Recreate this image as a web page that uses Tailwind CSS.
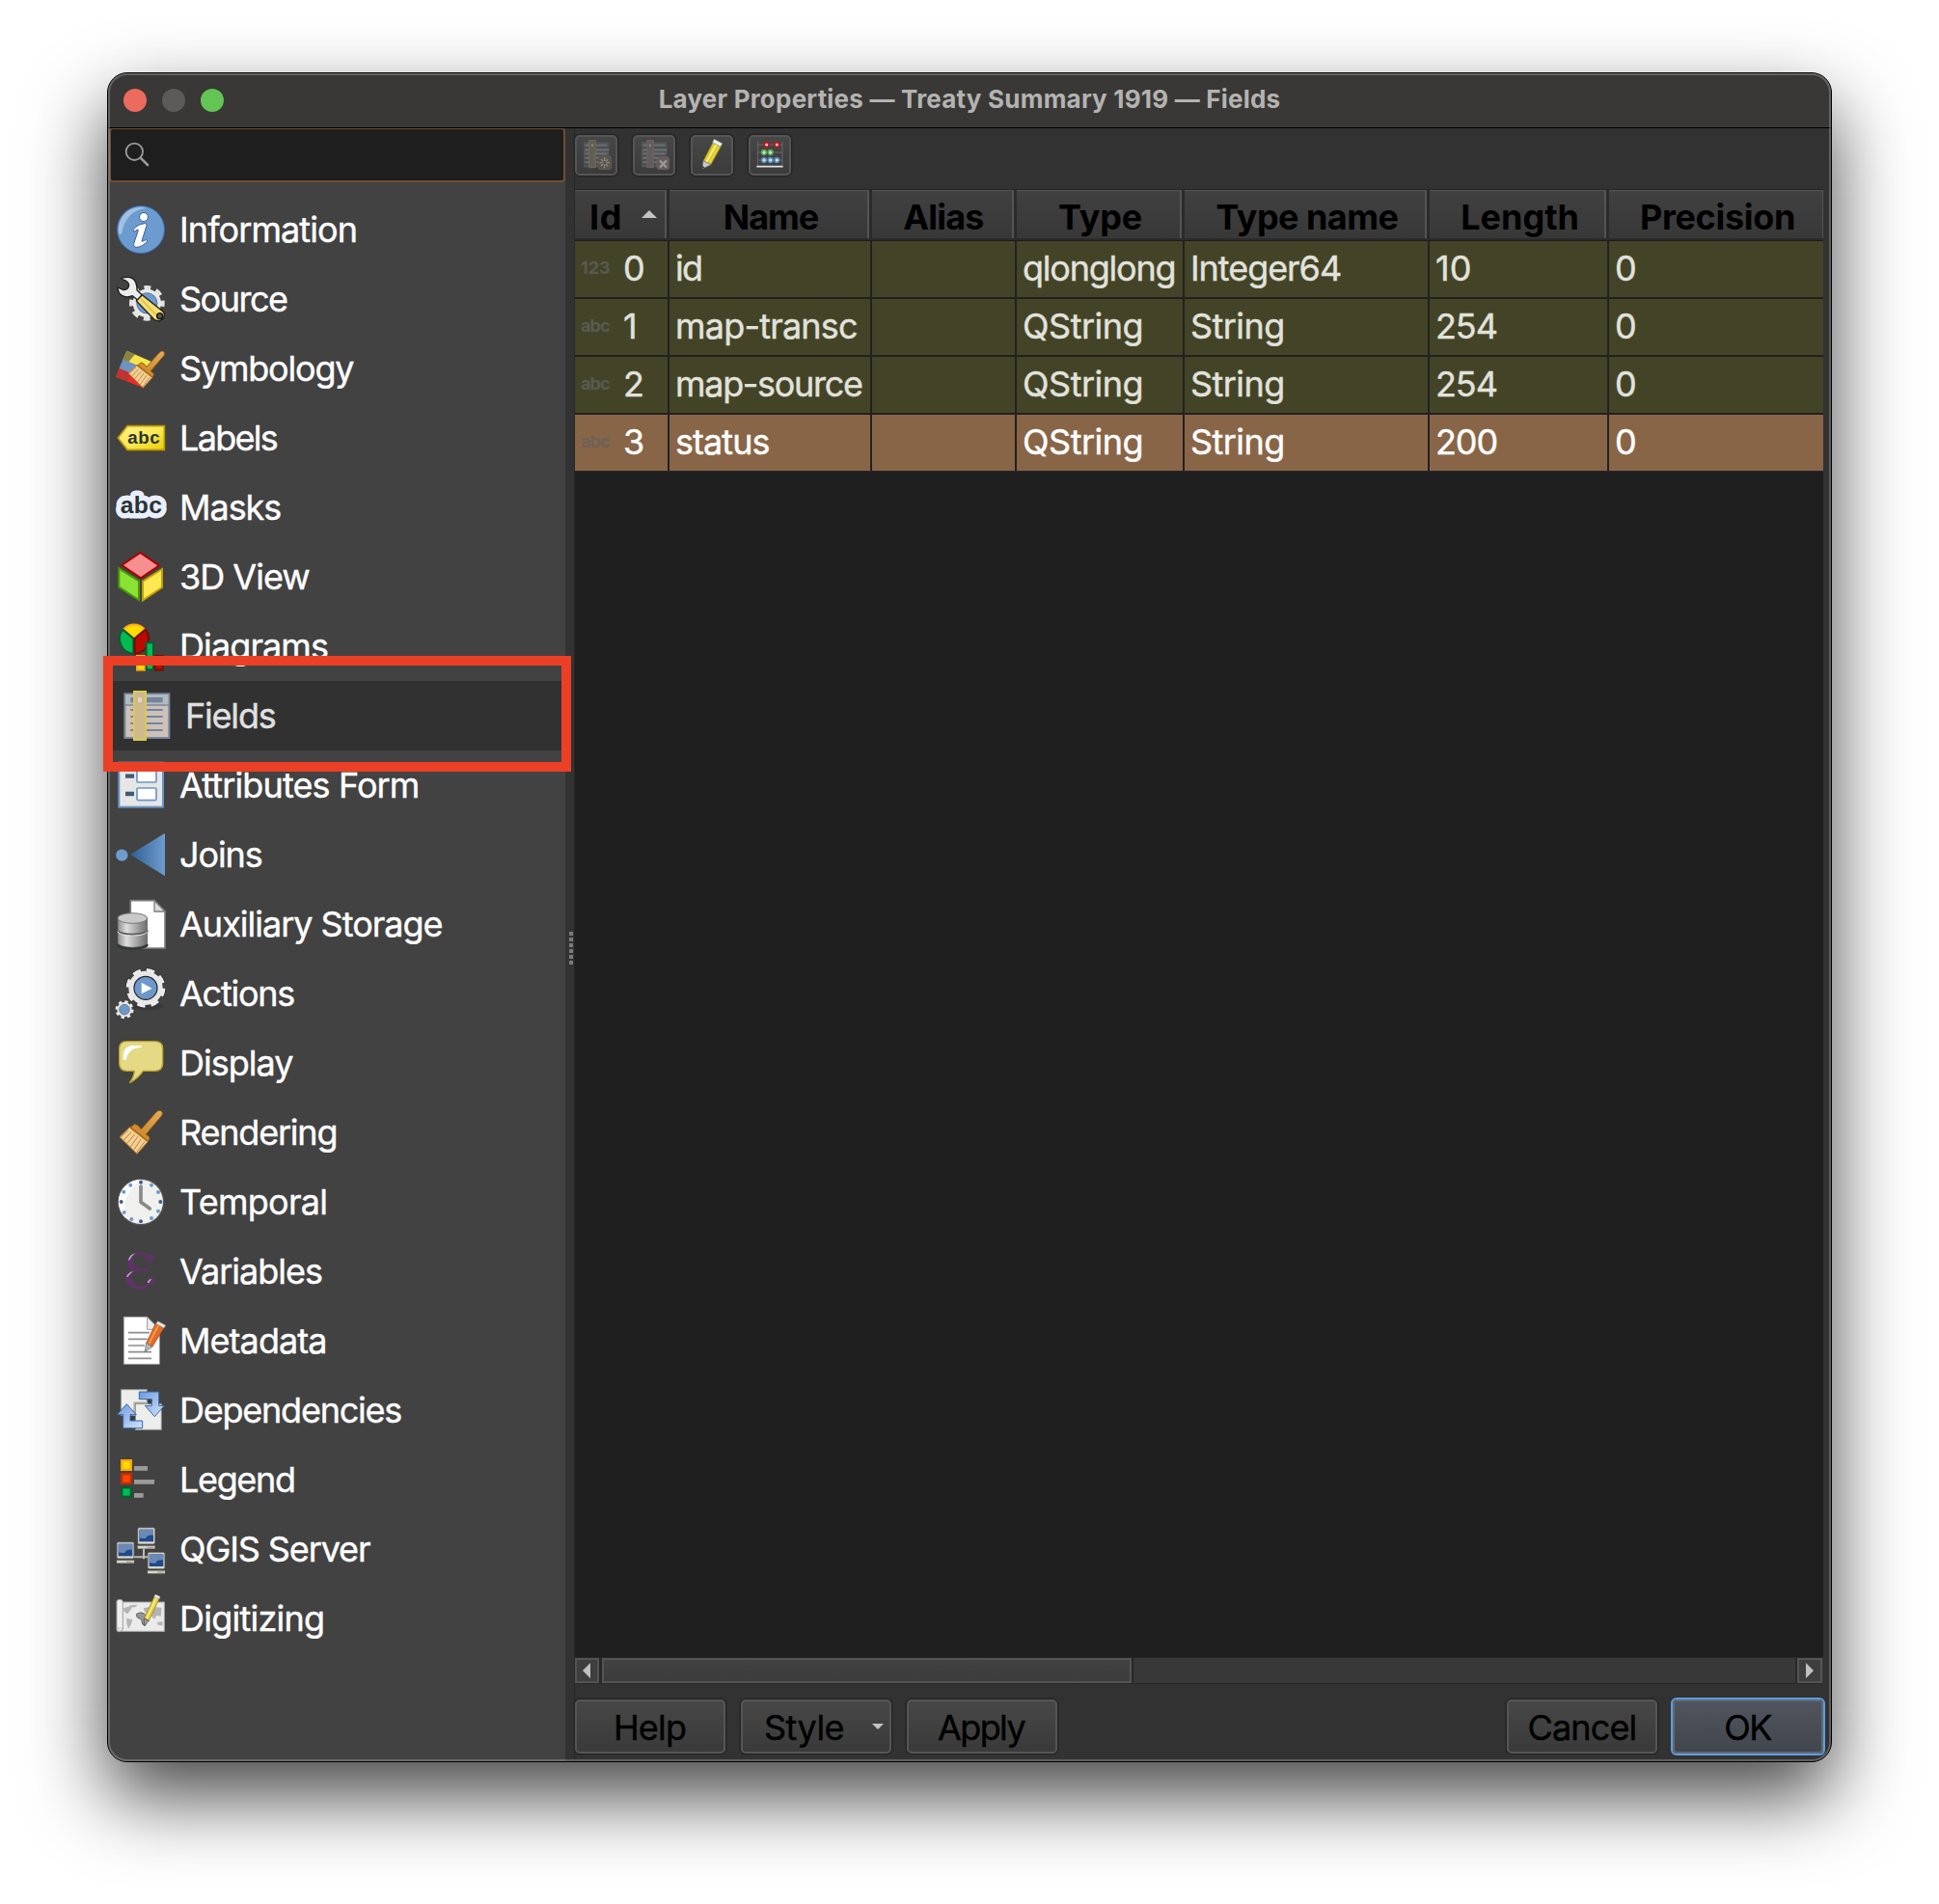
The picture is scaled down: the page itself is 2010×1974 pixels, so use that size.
<!DOCTYPE html>
<html lang="en">
<head>
<meta charset="utf-8">
<title>Layer Properties — Treaty Summary 1919 — Fields</title>
<script src="https://cdn.jsdelivr.net/npm/@tailwindcss/browser@4"></script>
</head>
<body class="bg-white w-[2010px] h-[1974px] overflow-hidden pt-[75px] pl-[111px] font-['Inter',sans-serif]">

<svg class="absolute w-0 h-0" aria-hidden="true">
  <defs>
    <linearGradient id="metal" x1="0" x2="1"><stop offset="0" stop-color="#8c8c8c"/><stop offset=".3" stop-color="#dedede"/><stop offset="1" stop-color="#6c6c6c"/></linearGradient>
    <linearGradient id="tag" x1="0" y1="0" x2="1" y2="1"><stop offset="0" stop-color="#fdf08c"/><stop offset=".5" stop-color="#fbe95a"/><stop offset="1" stop-color="#e8ce00"/></linearGradient>
    <linearGradient id="cone" x1="0" x2="1"><stop offset="0" stop-color="#2f5f92"/><stop offset="1" stop-color="#6f9cce"/></linearGradient>
    <linearGradient id="wood" x1="1" y1="0" x2="0" y2="1"><stop offset="0" stop-color="#e6ac5a"/><stop offset="1" stop-color="#c77f1e"/></linearGradient>
    <linearGradient id="arrow" x1="0" y1="0" x2="1" y2="1"><stop offset="0" stop-color="#6a9ae0"/><stop offset="1" stop-color="#d4e3fb"/></linearGradient>
    <g id="brush">
      <path d="M139 722L186 669Q193 661 201 665Q209 671 203 680L154 738Q163 742 166 750L160 761L105 718L118 706Q129 707 139 722Z" fill="url(#wood)" stroke="#8c5710" stroke-width="3"/>
      <path d="M104 715L161 760L126 799L72 746Z" fill="#f3cf94" stroke="#b3731f" stroke-width="3"/>
      <path d="M100 724L74 748M109 730L84 757M119 738L94 767M129 745L105 778M139 753L115 788M150 761L124 796" stroke="#bd863e" stroke-width="3"/>
      <path d="M104 716L160 760" stroke="#a56a16" stroke-width="5"/>
    </g>
    <g id="pc">
      <rect x="1" y="1" width="52" height="50" rx="4" fill="#dcdcd2" stroke="#8c8c84" stroke-width="2"/>
      <rect x="5" y="6" width="44" height="38" fill="#1f4a8c"/>
      <path d="M5 6H49V24Q30 22 24 34Q14 35 5 32Z" fill="#6c88b4"/>
      <rect x="0" y="57" width="54" height="9" fill="#d6d6c8" stroke="#77776f" stroke-width="1"/>
      <rect x="30" y="60" width="20" height="4" fill="#a6a69a"/>
    </g>
  </defs>
</svg>

<div class="relative w-[1788px] h-[1752px]">
  <main class="w-full h-full border border-black rounded-[21px] overflow-hidden bg-[#323232] flex flex-col shadow-[0_36px_80px_rgba(0,0,0,0.72)]">

    <!-- title bar -->
    <header class="relative h-[57px] shrink-0 bg-[#393836] border-b border-black flex items-center">
      <div class="flex gap-4 pl-4">
        <span class="size-6 rounded-full bg-[#ed6a5e]"></span>
        <span class="size-6 rounded-full bg-[#5c5b59]"></span>
        <span class="size-6 rounded-full bg-[#62c554]"></span>
      </div>
      <h1 class="absolute inset-x-0 top-[11px] text-center text-[26px] leading-8 font-bold tracking-[0.21px] text-[#b4b3b1]">Layer Properties — Treaty Summary 1919 — Fields</h1>
    </header>

    <div class="flex flex-1 min-h-0">
      <!-- sidebar -->
      <aside class="w-[474px] shrink-0 bg-[#424242]">
        <div class="ml-px h-14 bg-[#1e1e1e] border-2 border-t border-[#6f4e34] rounded-[4px] flex items-center pl-[13px] pb-[2px]">
          <svg class="size-7" viewBox="84 258 84 84" fill="none" stroke="#9a9a9a"><circle cx="118" cy="292" r="26" stroke-width="5.5"/><path d="M137 311L159 333" stroke-width="8" stroke-linecap="round"/></svg>
        </div>
        <nav class="pt-[13px] pl-[6px] text-[36px] leading-[72px] text-white whitespace-nowrap [-webkit-text-stroke:0.4px]">
          <div class="h-18 flex gap-3 tracking-[-0.9px]">
            <svg class="w-14 h-18 shrink-0" viewBox="54 426 168 216"><circle cx="138" cy="534" r="73.5" fill="#6c9ccf" stroke="#3a69ad" stroke-width="3"/><path d="M70 548A69 69 0 0 1 156 467Q90 474 78 548Z" fill="#b4cce6" opacity=".75"/><g stroke="#3b5f9a" stroke-width="3" fill="#fff"><circle cx="147" cy="495" r="13.500"/><path d="M114 535Q128 516 152 515L157 519L141 569Q141 574 155 565L158 570Q142 589 124 589Q113 588 117 575L130 536Q129 531 117 541Z"/></g></svg>
            Information</div>
          <div class="h-18 flex gap-3 tracking-[-1.5px]">
            <svg class="w-14 h-18 shrink-0" viewBox="54 642 168 216"><circle cx="157" cy="763" r="47" fill="none" stroke="#e2e2e2" stroke-width="16" stroke-dasharray="20 16.900" stroke-dashoffset="10"/><circle cx="157" cy="763" r="38" fill="#6c9ccf" stroke="#e8e8e8" stroke-width="12"/><circle cx="157" cy="763" r="32" fill="none" stroke="#44597a" stroke-width="2"/><path d="M78 685Q98 679 112 686Q126 694 126 722L142 738L128 753L112 740Q92 748 78 738Q67 731 66 714L84 722Q100 722 101 706Q99 694 80 689Z" fill="#ececec" stroke="#1e1e1e" stroke-width="4" stroke-linejoin="round"/><path d="M142 737L207 789Q214 797 209 808Q203 818 191 818L181 815L124 756Z" fill="#f6de72" stroke="#1e1e1e" stroke-width="4"/><path d="M138 750L190 804" stroke="#dcbb4d" stroke-width="4"/><circle cx="197" cy="803" r="9" fill="#555" stroke="#111" stroke-width="4"/></svg>
            Source</div>
          <div class="h-18 flex gap-3 tracking-[-1.2px]">
            <svg class="w-14 h-18 shrink-0" viewBox="54 -12 168 216"><path d="M94 41L170 74L160 100L82 69Z" fill="#f7e44c"/><path d="M94 41L120 52L100 76L82 69Z" fill="#8a8240"/><path d="M82 68L160 100L150 130L70 97Z" fill="#6d93c0"/><path d="M70 96L150 130L146 157L60 122Z" fill="#ea2b26"/><path d="M70 96L110 112L95 135L60 122Z" fill="#bd3430"/><use href="#brush" transform="translate(38.500 -519) scale(.845)"/></svg>
            Symbology</div>
          <div class="h-18 flex gap-3 tracking-[-1.7px]">
            <svg class="w-14 h-18 shrink-0" viewBox="54 204 168 216" stroke-linejoin="miter"><path d="M67 312L96 275H211V349H96Z" fill="url(#tag)" stroke="#c09a00" stroke-width="5"/><text x="97" y="330" font-family="Liberation Sans, sans-serif" font-weight="700" font-size="56" letter-spacing="0" textLength="100" fill="#2b3336">abc</text></svg>
            Labels</div>
          <div class="h-18 flex gap-3 tracking-[-1.05px]">
            <svg class="w-14 h-18 shrink-0" viewBox="54 420 168 216"><g font-family="Liberation Sans, sans-serif" font-weight="700" font-size="74"><text x="74" y="546" textLength="129" fill="#e9effd" stroke="#2c2f33" stroke-width="38" stroke-linejoin="round">abc</text><text x="74" y="546" textLength="129" fill="#e9effd" stroke="#e9effd" stroke-width="33" stroke-linejoin="round">abc</text><text x="74" y="546" textLength="129" fill="#2b3336">abc</text></g></svg>
            Masks</div>
          <div class="h-18 flex gap-3 tracking-[-0.99px]">
            <svg class="w-14 h-18 shrink-0" viewBox="54 636 168 216" stroke-width="6"><path d="M136 669L195 709L138 748L79 708Z" fill="#f78e90" stroke="#a80000"/><path d="M70 718L132 757V816L70 776Z" fill="#8ae234" stroke="#4a9a06"/><path d="M204 720L144 758V817L204 777Z" fill="#fde94f" stroke="#c4a000"/></svg>
            3D View</div>
          <div class="h-18 flex gap-3 tracking-[-0.9px]">
            <svg class="w-14 h-18 shrink-0" viewBox="54 -18 168 216" stroke-width="6"><path d="M117 66L84 37A45 45 0 0 1 150 37Z" fill="#ffdd00" stroke="#fba919"/><path d="M115 66V113A45 46 0 0 1 82 38Z" fill="#00bb52" stroke="#0d5a33"/><path d="M119 66V113A45 46 0 0 0 152 38Z" fill="#bb0b00" stroke="#6f0f08"/><rect x="126" y="120" width="24" height="44" fill="#ffdd00" stroke="#fba919"/><rect x="155" y="79" width="22" height="84" fill="#00bb52" stroke="#0d5a33"/><rect x="182" y="120" width="24" height="44" fill="#bb0b00" stroke="#6f0f08"/></svg>
            Diagrams</div>
          <div class="h-18 -ml-[4px] pl-[4px] flex gap-[18px] tracking-[-1.2px] bg-[#313131] text-[#e0e0e0]">
            <svg class="w-14 h-18 shrink-0" viewBox="54 198 168 216" overflow="visible"><rect x="88" y="238" width="138" height="137" fill="#cdc1b8" stroke="#76869c" stroke-width="6"/><rect x="91" y="241" width="132" height="29" fill="#b2bcc0"/><path d="M88 273H226" stroke="#76869c" stroke-width="5"/><rect x="106" y="249" width="100" height="16" fill="#73849f"/><path d="M106 288H206M106 309H206M106 330H206M106 351H206" stroke="#73849f" stroke-width="6"/><rect x="117" y="231" width="36" height="150" fill="#cdb98c" stroke="#dcc94e" stroke-width="6"/><rect x="129" y="250" width="12" height="14" fill="#e2d6cc"/></svg>
            Fields</div>
          <div class="h-18 flex gap-[12px] tracking-[-0.87px]">
            <svg class="w-14 h-18 shrink-0" viewBox="54 414 168 216"><rect x="70" y="452" width="137" height="138" fill="#e6e6e6" stroke="#6a96c8" stroke-width="6"/><g fill="#fff" stroke="#6a96c8" stroke-width="5"><rect x="126" y="475" width="60" height="38" rx="4"/><rect x="126" y="531" width="60" height="38" rx="4"/></g><path d="M90 494H117M90 549H117" stroke="#415a73" stroke-width="13"/></svg>
            Attributes Form</div>
          <div class="h-18 flex gap-[12px] tracking-[-1.1px]">
            <svg class="w-14 h-18 shrink-0" viewBox="54 630 168 216"><circle cx="79" cy="740" r="18.500" fill="#6f9cce"/><path d="M105 738L213 671V805Z" fill="url(#cone)"/></svg>
            Joins</div>
          <div class="h-18 flex gap-[12px] tracking-[-1px]">
            <svg class="w-14 h-18 shrink-0" viewBox="54 -24 168 216"><path d="M106 11H180L213 45V159H106Z" fill="#fff" stroke="#7e7e7e" stroke-width="5"/><path d="M180 11V45H213Z" fill="#ddd" stroke="#7e7e7e" stroke-width="4"/><ellipse cx="112" cy="150" rx="49" ry="14" fill="#2f3437"/><path d="M66 66V142A46 15 0 0 0 158 142V66Z" fill="url(#metal)" stroke="#555" stroke-width="2"/><path d="M66 104A46 13 0 0 0 158 104" fill="none" stroke="#555" stroke-width="7"/><path d="M66 107A46 13 0 0 0 158 107" fill="none" stroke="#f2f2f2" stroke-width="3"/><ellipse cx="112" cy="66" rx="46" ry="16" fill="#c9c9c9" stroke="#777" stroke-width="3"/></svg>
            Auxiliary Storage</div>
          <div class="h-18 flex gap-[12px] tracking-[-1.25px]">
            <svg class="w-14 h-18 shrink-0" viewBox="54 192 168 216"><ellipse cx="156" cy="340" rx="52" ry="12" fill="#333" opacity=".6"/><circle cx="153" cy="283" r="53" fill="none" stroke="#2b2b2b" stroke-width="20" stroke-dasharray="26 15.600"/><circle cx="153" cy="283" r="53" fill="none" stroke="#ececec" stroke-width="16" stroke-dasharray="24 17.600" stroke-dashoffset="-1"/><circle cx="153" cy="283" r="44" fill="none" stroke="#e8e8e8" stroke-width="18"/><circle cx="153" cy="283" r="36" fill="#6c98cb" stroke="#222" stroke-width="3.500"/><path d="M140 266L173 284L140 301Z" fill="#fff"/><circle cx="87" cy="350" r="24" fill="none" stroke="#e8e8e8" stroke-width="9" stroke-dasharray="10 8.850"/><circle cx="87" cy="350" r="19" fill="#6c98cb" stroke="#e8e8e8" stroke-width="8"/><circle cx="87" cy="350" r="16" fill="none" stroke="#345" stroke-width="2"/></svg>
            Actions</div>
          <div class="h-18 flex gap-3 tracking-[-0.98px]">
            <svg class="w-14 h-18 shrink-0" viewBox="54 408 168 216"><path d="M94 449H182Q206 449 206 472V517Q206 541 182 541H145Q130 564 103 578Q117 560 118 541H94Q71 541 71 517V472Q71 449 94 449Z" fill="#e4d985" stroke="#b9a02c" stroke-width="4"/><path d="M83 506Q80 464 112 462H140V468Q100 468 92 506Z" fill="#fff"/></svg>
            Display</div>
          <div class="h-18 flex gap-3 tracking-[-1.2px]">
            <svg class="w-14 h-18 shrink-0" viewBox="54 624 168 216"><use href="#brush"/></svg>
            Rendering</div>
          <div class="h-18 flex gap-[12px] tracking-[-0.72px]">
            <svg class="w-14 h-18 shrink-0" viewBox="54 -30 168 216"><circle cx="138" cy="78" r="73" fill="#555"/><circle cx="138" cy="78" r="69" fill="#f0f0ee"/><path d="M138 9A69 69 0 0 0 90 128Q74 60 138 9Z" fill="#fff"/><g fill="#3d5f8c"><circle cx="138" cy="17" r="6"/><circle cx="199" cy="78" r="6"/><circle cx="138" cy="139" r="6"/><circle cx="77" cy="78" r="6"/></g><g fill="#6a9ad2"><circle cx="171" cy="26" r="6"/><circle cx="192" cy="48" r="6"/><circle cx="192" cy="107" r="6"/><circle cx="171" cy="129" r="6"/><circle cx="109" cy="132" r="6"/><circle cx="86" cy="111" r="6"/><circle cx="85" cy="47" r="6"/><circle cx="106" cy="26" r="6"/></g><path d="M138 30V79L166 99" fill="none" stroke="#888a85" stroke-width="11" stroke-linecap="round" stroke-linejoin="round"/></svg>
            Temporal</div>
          <div class="h-18 flex gap-[12px] tracking-[-1px]">
            <svg class="w-14 h-18 shrink-0" viewBox="54 186 168 216"><g fill="none" stroke="#603368" stroke-linecap="round"><path d="M165 252Q150 236 130 238Q104 243 104 264Q106 284 128 288H158" stroke-width="8"/><path d="M128 289Q98 296 98 318Q101 344 136 346Q160 344 172 326" stroke-width="9"/><path d="M104 256Q104 278 116 284M98 308Q99 330 114 338" stroke-width="17"/></g><circle cx="166" cy="252" r="11" fill="#603368"/><circle cx="169" cy="324" r="11" fill="#603368"/><path d="M99 260Q103 242 120 238Q106 250 104 259Z M93 312Q98 298 114 294Q104 302 97 312Z M158 330Q162 318 172 317L163 330Z" fill="#c2aec6"/></svg>
            Variables</div>
          <div class="h-18 flex gap-3 tracking-[-0.95px]">
            <svg class="w-14 h-18 shrink-0" viewBox="54 402 168 216"><path d="M85 436H158L196 474V583H85Z" fill="#fff" stroke="#a0a0a0" stroke-width="2.500"/><path d="M158 437V475H196Z" fill="#eee" stroke="#999" stroke-width="3"/><path d="M99 485H165M99 505H158M99 525H150M99 545H171M99 565H171" stroke="#8e8e8e" stroke-width="5"/><path d="M184 456L210 470L174 529L155 517Z" fill="#e0692c" stroke="#a84613" stroke-width="2"/><path d="M193 461L162 521" stroke="#f29a3c" stroke-width="6"/><path d="M191 449L215 462L210 471L185 457Z" fill="#e8e8e8" stroke="#888" stroke-width="1.500"/><path d="M155 517L174 529L151 544Z" fill="#b9b9b9" stroke="#555" stroke-width="2"/></svg>
            Metadata</div>
          <div class="h-18 flex gap-3 tracking-[-1.23px]">
            <svg class="w-14 h-18 shrink-0" viewBox="54 618 168 216"><rect x="76" y="662" width="81" height="80" fill="#ededeb" stroke="#8c8e88" stroke-width="3"/><path d="M115 790V700H160V712H122Z" fill="#b5b5b0"/><rect x="121" y="706" width="81" height="81" fill="#ededeb" stroke="#8c8e88" stroke-width="3"/><path d="M159 692H172V706H159ZM106 744H120V757H106Z" fill="#3c3c3c"/><g fill="url(#arrow)" stroke="#3465a4" stroke-width="3"><path d="M133 669H194V712H211L181 746L151 712H172V692H133Z"/><path d="M143 782H83V740H64L94 707L124 740H105V759H143Z"/></g></svg>
            Dependencies</div>
          <div class="h-18 flex gap-3 tracking-[-1.35px]">
            <svg class="w-14 h-18 shrink-0" viewBox="54 -6 168 216"><g stroke-width="7"><rect x="78.500" y="42.500" width="29" height="29" fill="#ffdd00" stroke="#fca60a"/><rect x="78.500" y="84.500" width="29" height="29" fill="#ff4500" stroke="#bf2d04"/><rect x="78.500" y="126.500" width="29" height="29" fill="#00bb52" stroke="#0a5a32"/></g><path d="M117 67H159M117 109H180M117 151H146" stroke="#9a9a9a" stroke-width="14"/></svg>
            Legend</div>
          <div class="h-18 flex gap-3 tracking-[-1.1px]">
            <svg class="w-14 h-18 shrink-0" viewBox="54 210 168 216"><path d="M147 316V349M117 343H160" stroke="#b8b8b8" stroke-width="6"/><use href="#pc" x="128" y="251"/><use href="#pc" x="63" y="296"/><use href="#pc" x="159" y="328"/></svg>
            QGIS Server</div>
          <div class="h-18 flex gap-3 tracking-[-0.75px]">
            <svg class="w-14 h-18 shrink-0" viewBox="54 426 168 216"><rect x="78" y="483" width="133" height="91" fill="#ebebeb" stroke="#a5a5a5" stroke-width="3"/><path d="M84 502L104 495L116 492L106 508L96 520L86 512ZM104 492L128 491L118 500ZM94 533L112 538L108 552L99 566L94 548ZM146 502L170 497L203 500L200 528L188 524L180 536L164 520L150 514ZM188 546L205 543L206 556L192 555Z" fill="#b4b4b4"/><path d="M124 520Q134 512 148 518L160 532L152 556L143 552L140 538L126 530Z" fill="#969696" stroke="#555" stroke-width="2.500"/><path d="M63 480Q64 475 72 475Q82 475 82 482V566Q82 574 70 575Q62 575 63 568Z" fill="#efefef" stroke="#a0a0a0" stroke-width="3"/><path d="M66 564H82L74 574Z" fill="#fff" stroke="#aaa" stroke-width="2"/><path d="M180 466L195 473L163 541L148 533Z" fill="#e2cf3e" stroke="#8f8220" stroke-width="2"/><path d="M186 470L156 535" stroke="#fbf39a" stroke-width="4"/><path d="M183 459L198 466L195 474L179 467Z" fill="#f0f0f0" stroke="#888" stroke-width="1.500"/><path d="M148 533L163 541L148 557Z" fill="#999" stroke="#444" stroke-width="2"/></svg>
            Digitizing</div>
        </nav>
      </aside>

      <!-- splitter handle -->
      <div class="w-[10px] shrink-0 pl-1 border-r border-[#272727] flex items-center pt-[7px]">
        <div class="flex flex-col gap-[2px]">
          <span class="size-1 bg-[#7a7a7a]"></span><span class="size-1 bg-[#7a7a7a]"></span><span class="size-1 bg-[#7a7a7a]"></span><span class="size-1 bg-[#7a7a7a]"></span><span class="size-1 bg-[#7a7a7a]"></span><span class="size-1 bg-[#7a7a7a]"></span>
        </div>
      </div>

      <!-- content -->
      <section class="w-[1294px] flex flex-col">
        <div class="h-[63px] shrink-0 pt-[7px] flex gap-4">
          <button class="w-11 h-[42px] rounded-[5px] border-2 border-[#555] bg-linear-to-b from-[#474747] to-[#3b3b3b] shadow-[0_0_0_1.5px_#262626]">
            <svg class="w-10 h-[38px]" viewBox="24 36 120 114"><rect x="45" y="52" width="79" height="78" fill="#53575a"/><path d="M50 62H118M50 76H124M50 88H118M50 101H118M50 114H100" stroke="#6c7074" stroke-width="5"/><path d="M45 69H124M45 95H124M45 108H90M45 121H90" stroke="#45484b" stroke-width="3"/><rect x="62" y="47" width="20" height="84" fill="#625e55" stroke="#716c5a" stroke-width="3"/><rect x="69" y="58" width="6" height="7" fill="#8a8880"/><rect x="91" y="96" width="40" height="41" rx="7" fill="#57534a" stroke="#69634f" stroke-width="2"/><path d="M110 99V133M94 116H126M99 105L121 127M121 105L99 127" stroke="#8e8b84" stroke-width="4"/><circle cx="110" cy="116" r="6" fill="#57534a"/></svg>
          </button>
          <button class="w-11 h-[42px] rounded-[5px] border-2 border-[#555] bg-linear-to-b from-[#474747] to-[#3b3b3b] shadow-[0_0_0_1.5px_#262626]">
            <svg class="w-10 h-[38px]" viewBox="204 36 120 114"><rect x="225" y="52" width="79" height="78" fill="#53575a"/><path d="M230 62H298M230 76H304M230 88H298M230 101H298M230 114H280" stroke="#6c7074" stroke-width="5"/><path d="M225 69H304M225 95H304M225 108H270M225 121H270" stroke="#45484b" stroke-width="3"/><rect x="242" y="47" width="20" height="84" fill="#645c5a" stroke="#6e6462" stroke-width="3"/><rect x="249" y="58" width="6" height="7" fill="#8a8484"/><rect x="273" y="98" width="38" height="39" rx="7" fill="#655b5b" stroke="#716666" stroke-width="2"/><path d="M282 109L303 131M303 109L282 131" stroke="#9b9696" stroke-width="7"/></svg>
          </button>
          <button class="w-11 h-[42px] rounded-[5px] border-2 border-[#555] bg-linear-to-b from-[#474747] to-[#3b3b3b] shadow-[0_0_0_1.5px_#262626]">
            <svg class="w-10 h-[38px]" viewBox="384 36 120 114"><path d="M447 53L472 66L441 122L417 110Z" fill="#d9c62c" stroke="#7e7318" stroke-width="2"/><path d="M457 60L427 114" stroke="#fdf27c" stroke-width="6"/><path d="M466 65L436 118" stroke="#efe05a" stroke-width="3"/><path d="M451 43L476 56L471 66L446 53Z" fill="#efefef" stroke="#999" stroke-width="1.500"/><path d="M417 110L441 122L414 135Z" fill="#c9c9c9" stroke="#777" stroke-width="2"/><path d="M415 126L421 130L414 135Z" fill="#333"/></svg>
          </button>
          <button class="w-11 h-[42px] rounded-[5px] border-2 border-[#555] bg-linear-to-b from-[#474747] to-[#3b3b3b] shadow-[0_0_0_1.5px_#262626]">
            <svg class="w-10 h-[38px]" viewBox="564 36 120 114"><path d="M587 50V124M663 50V124M587 60H663M587 84H663M587 108H663" stroke="#6f6f6f" stroke-width="2.500"/><path d="M583 128H665" stroke="#e2e2e2" stroke-width="5"/><g stroke-width="5"><g fill="#ffc4c4" stroke="#c41414"><circle cx="614" cy="60" r="7"/><circle cx="646" cy="60" r="7"/></g><g fill="#c8f5c8" stroke="#5aa85a"><circle cx="606" cy="84" r="7"/><circle cx="626" cy="84" r="7"/></g><g fill="#d4eafa" stroke="#5a8cb8"><circle cx="606" cy="108" r="7"/><circle cx="626" cy="108" r="7"/><circle cx="646" cy="108" r="7"/></g></g></svg>
          </button>
        </div>

        <div class="flex-1 bg-[#1e1e1e] border-t border-[#262626]">
          <!-- column headings -->
          <div class="grid grid-cols-[95px_207px_147px_171px_251px_183px_222px] gap-x-[3px] h-[53px] pb-[3px] border-b border-[#1c1c1c] bg-[#2b2b2b] text-[36px] leading-[50px] font-bold text-black text-center whitespace-nowrap">
            <div class="h-[50px] bg-linear-to-b from-[#404040] to-[#383838] border-t border-r-2 border-[#545454] pt-[2px] flex justify-between pl-[15px] pr-[8px]"><span class="tracking-[0.6px]">Id</span><svg class="w-4 h-2 mt-[18px]" viewBox="0 0 16 8"><path d="M8 0L16 8H0Z" fill="#c4c4c4"/></svg></div>
            <div class="h-[50px] bg-linear-to-b from-[#404040] to-[#383838] border-t border-r-2 border-[#545454] pt-[2px] pl-[5px] tracking-[-1.06px]">Name</div>
            <div class="h-[50px] bg-linear-to-b from-[#404040] to-[#383838] border-t border-r-2 border-[#545454] pt-[2px] pl-[3px] tracking-[-0.82px]">Alias</div>
            <div class="h-[50px] bg-linear-to-b from-[#404040] to-[#383838] border-t border-r-2 border-[#545454] pt-[2px] pl-[4px] tracking-[-0.18px]">Type</div>
            <div class="h-[50px] bg-linear-to-b from-[#404040] to-[#383838] border-t border-r-2 border-[#545454] pt-[2px] pl-[5px] tracking-[-0.54px]">Type name</div>
            <div class="h-[50px] bg-linear-to-b from-[#404040] to-[#383838] border-t border-r-2 border-[#545454] pt-[2px] pl-[6px]">Length</div>
            <div class="h-[50px] bg-linear-to-b from-[#404040] to-[#383838] border-t border-r border-[#545454] pt-[2px] pl-[4px] tracking-[-0.31px]">Precision</div>
          </div>
          <!-- field rows -->
          <div class="grid grid-cols-[96px_208px_148px_172px_252px_184px_222px] auto-rows-[58px] gap-[2px] bg-[#212121] border-b border-[#282828] text-[36px] leading-[56px] text-[#e2e2dc] whitespace-nowrap [-webkit-text-stroke:0.4px] *:bg-[#434427] *:pl-[6px]">
            <div class="flex"><span class="w-[44px] text-[18px] leading-[55px] font-bold text-[#595a51] [-webkit-text-stroke:0px]">123</span>0</div>
            <div class="tracking-[-1.7px]">id</div><div></div>
            <div class="tracking-[-1.22px]">qlonglong</div>
            <div class="tracking-[-1.05px]">Integer64</div>
            <div>10</div><div>0</div>

            <div class="flex"><span class="w-[44px] text-[18px] leading-[56px] font-bold tracking-[-0.9px] text-[#595a51] [-webkit-text-stroke:0px]">abc</span>1</div>
            <div class="tracking-[-0.8px]">map-transc</div><div></div>
            <div class="tracking-[-0.5px]">QString</div>
            <div class="tracking-[-0.55px]">String</div>
            <div class="tracking-[-1.1px]">254</div><div>0</div>

            <div class="flex"><span class="w-[44px] text-[18px] leading-[56px] font-bold tracking-[-0.9px] text-[#595a51] [-webkit-text-stroke:0px]">abc</span>2</div>
            <div class="tracking-[-1.31px]">map-source</div><div></div>
            <div class="tracking-[-0.5px]">QString</div>
            <div class="tracking-[-0.55px]">String</div>
            <div class="tracking-[-1.1px]">254</div><div>0</div>

            <div class="bg-[#896547]! text-white flex"><span class="w-[44px] text-[18px] leading-[56px] font-bold tracking-[-0.9px] text-[#6e6056] [-webkit-text-stroke:0px]">abc</span>3</div>
            <div class="bg-[#896547]! text-white tracking-[-0.95px]">status</div><div class="bg-[#896547]!"></div>
            <div class="bg-[#896547]! text-white tracking-[-0.5px]">QString</div>
            <div class="bg-[#896547]! text-white tracking-[-0.55px]">String</div>
            <div class="bg-[#896547]! text-white tracking-[-1.1px]">200</div><div class="bg-[#896547]! text-white">0</div>
          </div>
        </div>

        <!-- horizontal scrollbar -->
        <div class="h-[28px] shrink-0 border-y border-[#282828] bg-[#383838] flex">
          <div class="w-[25px] h-[26px] border-2 border-[#545454] bg-[#3e3e3e] flex items-center justify-center pr-px"><svg class="w-2 h-4" viewBox="0 0 8 16"><path d="M8 0V16L0 8Z" fill="#c0c0c0"/></svg></div>
          <div class="w-[3px] bg-[#282828]"></div>
          <div class="w-[549px] h-[26px] border-2 border-[#545454] bg-linear-to-b from-[#424242] to-[#3c3c3c]"></div>
          <div class="w-[2px] bg-[#282828]"></div>
          <div class="flex-1"></div>
          <div class="w-[2px] bg-[#282828]"></div>
          <div class="w-[26px] mr-px h-[26px] border-2 border-[#545454] bg-[#3e3e3e] flex items-center justify-center"><svg class="w-2 h-4" viewBox="0 0 8 16"><path d="M0 0V16L8 8Z" fill="#c0c0c0"/></svg></div>
        </div>

        <!-- dialog buttons -->
        <div class="h-[80px] shrink-0 pt-[16px] flex gap-4 text-[36px] leading-[54px] text-black [-webkit-text-stroke:0.4px]">
          <button class="w-[156px] h-14 rounded-[5px] border-2 border-[#555] bg-linear-to-b from-[#474747] to-[#3a3a3a] shadow-[0_0_0_1.5px_#262626] tracking-[-0.82px] pr-px">Help</button>
          <button class="w-[156px] h-14 rounded-[5px] border-2 border-[#555] bg-linear-to-b from-[#474747] to-[#3a3a3a] shadow-[0_0_0_1.5px_#262626] tracking-[-0.53px] flex items-center justify-between pl-[22px] pr-[6px]"><span class="pt-px">Style</span><svg class="w-3 h-1.5" viewBox="0 0 12 6"><path d="M0 0H12L6 6Z" fill="#c4c4c4"/></svg></button>
          <button class="w-[156px] h-14 rounded-[5px] border-2 border-[#555] bg-linear-to-b from-[#474747] to-[#3a3a3a] shadow-[0_0_0_1.5px_#262626] tracking-[-1.6px] pr-[2px]">Apply</button>
          <div class="flex-1"></div>
          <button class="w-[156px] h-14 rounded-[5px] border-2 border-[#555] bg-linear-to-b from-[#474747] to-[#3a3a3a] shadow-[0_0_0_1.5px_#262626] tracking-[-0.87px]">Cancel</button>
          <button class="w-[156px] h-14 rounded-[4px] border-2 border-[#636870] bg-linear-to-b from-[#4f545e] to-[#42474e] shadow-[0_0_0_2px_#5b9fe8] tracking-[-1.53px] pr-px">OK</button>
        </div>
      </section>
    </div>
  </main>
  <!-- window edge highlight -->
  <div class="absolute inset-px rounded-[20px] border-2 border-white/22 pointer-events-none"></div>
  <!-- callout around the Fields entry -->
  <div class="absolute left-[-4px] top-[605px] w-[485px] h-[120px] border-[10px] border-[#ec4026]"></div>
</div>
</body>
</html>
